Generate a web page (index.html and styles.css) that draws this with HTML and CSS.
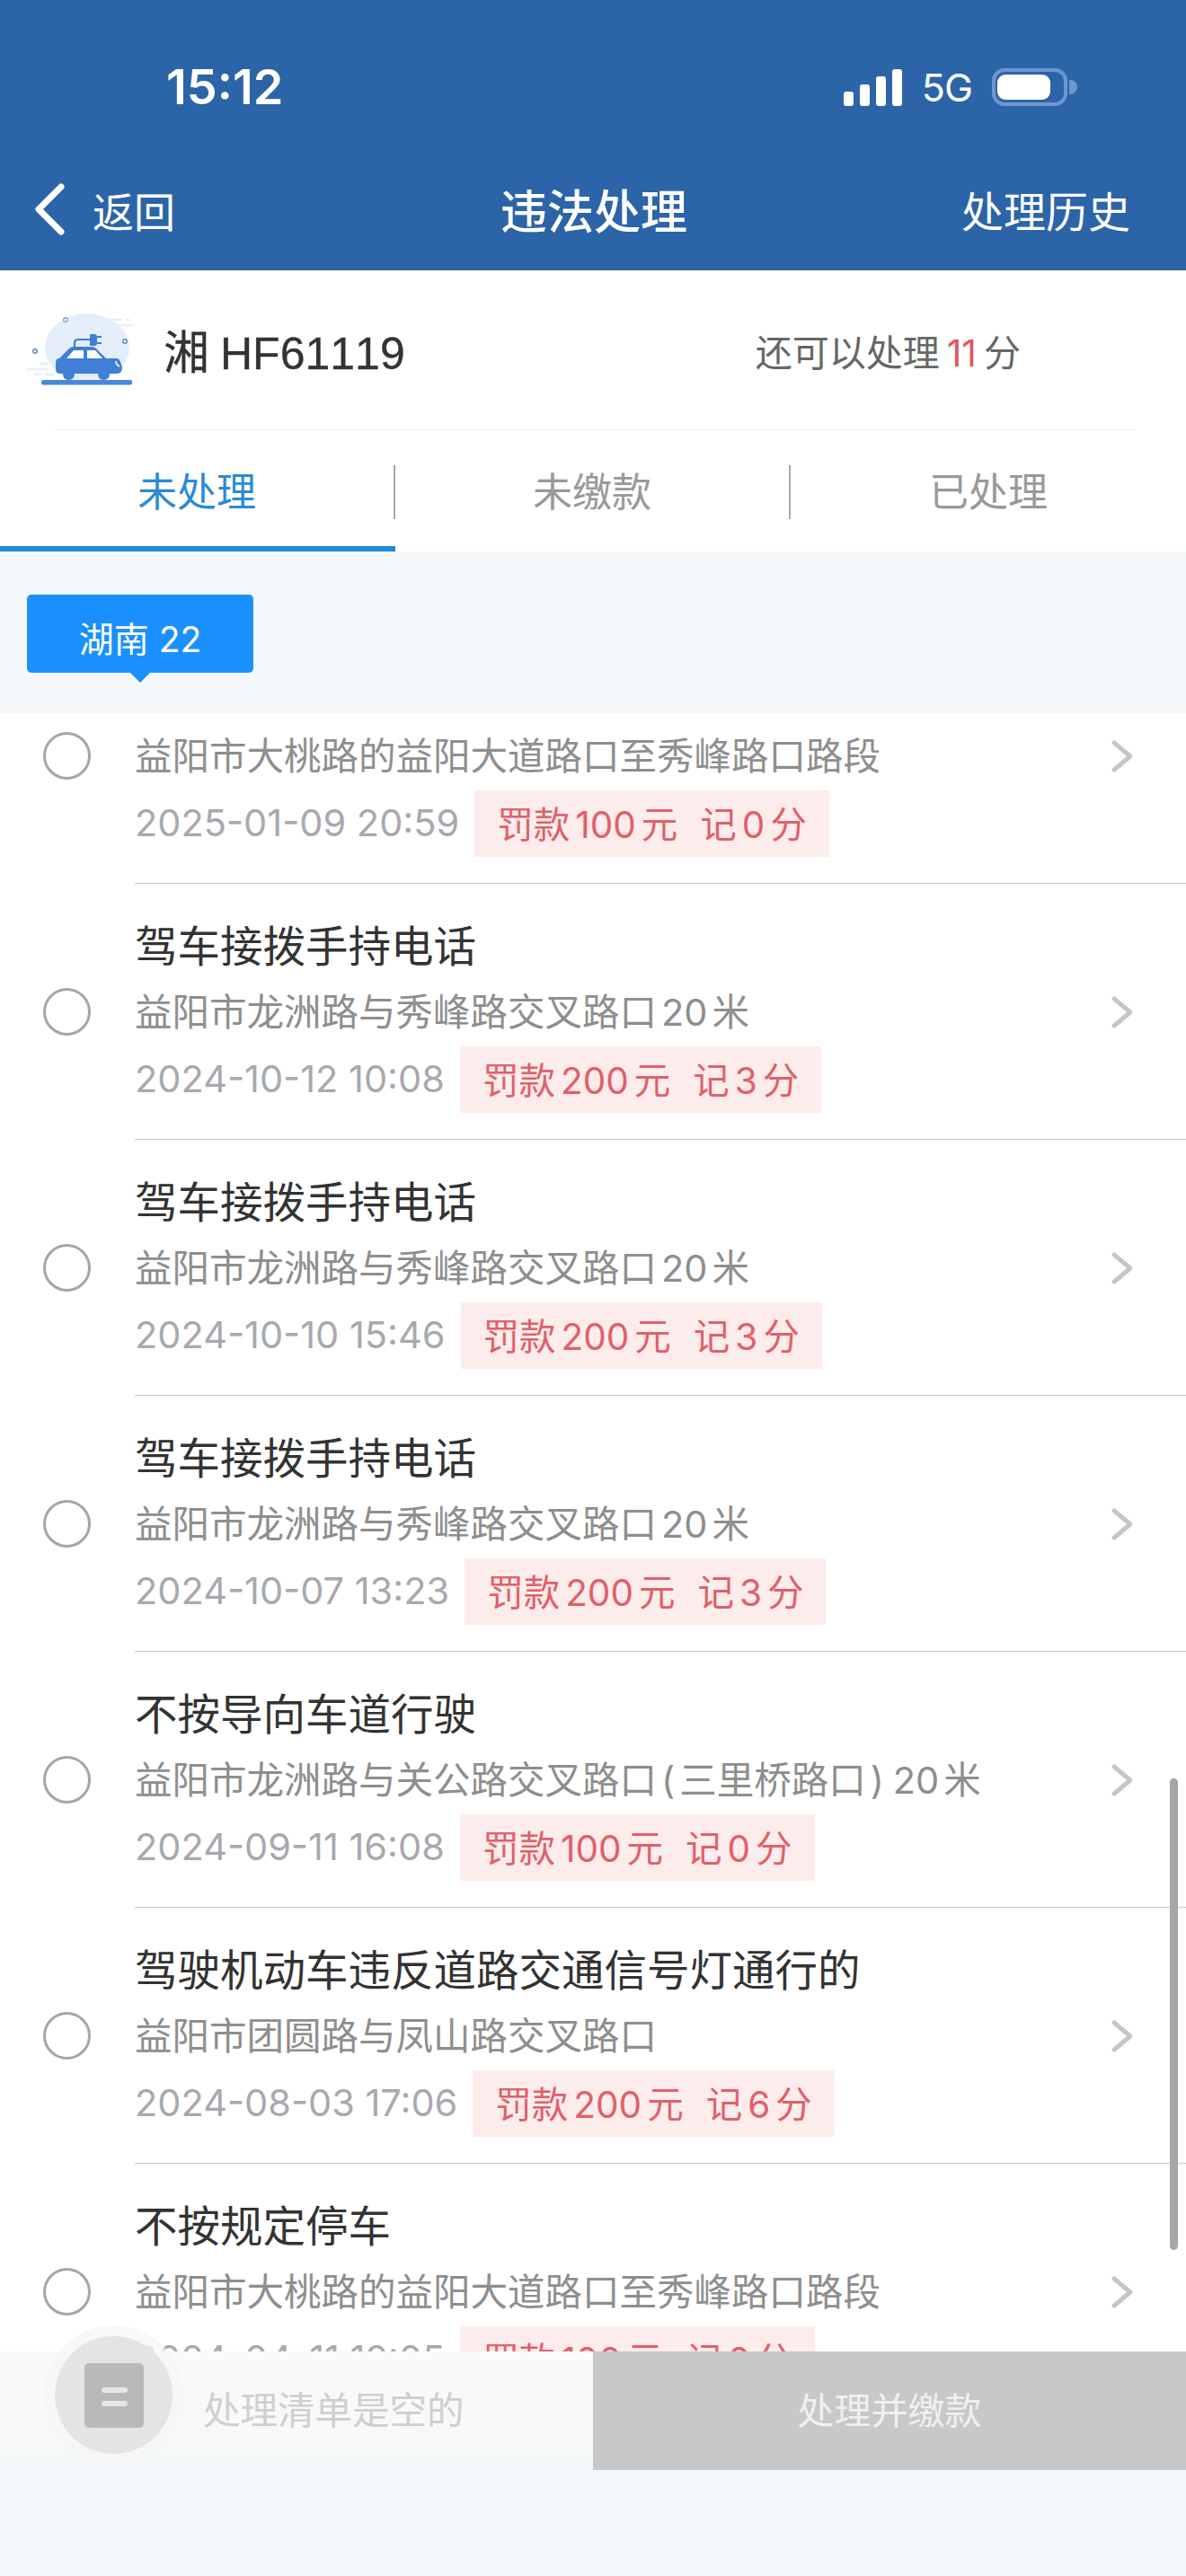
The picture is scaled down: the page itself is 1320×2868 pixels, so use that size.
FILE: index.html
```html
<!DOCTYPE html>
<html lang="zh-CN">
<head>
    <meta charset="UTF-8">
    <meta name="viewport" content="width=device-width, initial-scale=1.0">
    <title>违法处理</title>
    <link rel="stylesheet" href="styles.css">
</head>
<body>
<div class="page">

    <!-- Header -->
    <header class="header">
        <div class="status">
            <span class="time">15:12</span>
            <div class="status-right">
                <div class="signal">
                    <i class="bar1"></i><i class="bar2"></i><i class="bar3"></i><i class="bar4"></i>
                </div>
                <span class="net">5G</span>
                <div class="battery"><div class="battery-fill"></div></div>
                <div class="battery-nub"></div>
            </div>
        </div>
        <nav class="navbar">
            <a class="back">
                <svg width="36" height="58" viewBox="0 0 36 58"><path d="M31 4 L6 29 L31 54" fill="none" stroke="#fff" stroke-width="7" stroke-linecap="round" stroke-linejoin="round"/></svg>
                <span>返回</span>
            </a>
            <h1 class="title">违法处理</h1>
            <a class="history">处理历史</a>
        </nav>
    </header>

    <!-- Car info -->
    <section class="car">
        <svg class="car-icon" width="125" height="85" viewBox="28 346 125 85">
            <ellipse cx="97" cy="386" rx="47" ry="38" fill="#e4eefb"/>
            <path d="M118 355h18M140 355h4M124 361h26M30 410h24M44 404h10M38 416h8M50 416h10" stroke="#e8eef7" stroke-width="2.5" fill="none"/>
            <circle cx="73" cy="355" r="2.3" fill="#fff" stroke="#8f9fd4" stroke-width="1.4"/>
            <circle cx="139" cy="379" r="2.3" fill="#fff" stroke="#5c86c0" stroke-width="1.4"/>
            <circle cx="39" cy="390" r="2.3" fill="#fff" stroke="#5c86c0" stroke-width="1.4"/>
            <path d="M83 387v-6q0-4 4-4h13" fill="none" stroke="#3f7fd6" stroke-width="2.2"/>
            <path d="M100 371h5q3 0 3 3v7q0 3-3 3h-5z" fill="#3f7fd6"/>
            <path d="M108 374h5M108 381h5" stroke="#3f7fd6" stroke-width="2"/>
            <path d="M66 398l11-11q2-2 5-2h20q3 0 5 2l11 11h11q4 0 5 4l2 6q0 7-6 7H67q-5 0-5-5v-7q0-5 4-5z" fill="#3f7fd6"/>
            <path d="M74 398l8-9h11v9zM97 389h9l8 9H97z" fill="#fff"/>
            <path d="M129 401q0 4 4 6" fill="none" stroke="#fff" stroke-width="1.6"/>
            <path d="M70 415h13q0 7-6.500 7T70 415zM109 415h13q0 7-6.500 7T109 415z" fill="#3f7fd6"/>
            <rect x="46" y="422" width="101" height="5.500" rx="2" fill="#4a88dc"/>
        </svg>
        <div class="plate"><span class="plate-area">湘</span><span>HF61119</span></div>
        <div class="points">还可以处理<b>11</b>分</div>
    </section>
    <div class="car-line"></div>

    <!-- Tabs -->
    <div class="tabs">
        <div class="tab active"><div class="tab-label">未处理</div></div>
        <div class="tab"><div class="tab-label">未缴款</div></div>
        <div class="tab"><div class="tab-label last">已处理</div></div>
    </div>

    <!-- Province -->
    <div class="province">
        <div class="badge">湖南 22</div>
    </div>

    <!-- List -->
    <main class="list">
        <div class="row">
            <div class="radio"></div>
            <div class="place">益阳市大桃路的益阳大道路口至秀峰路口路段</div>
            <svg class="arrow" width="27" height="38" viewBox="0 0 27 38"><path d="M4 4 L22 19 L4 34" fill="none" stroke="#c6c6c6" stroke-width="5" stroke-linecap="round" stroke-linejoin="round"/></svg>
            <div class="meta">
                <span class="date">2025-01-09 20:59</span>
                <div class="fine"><span>罚款<i>100</i>元</span><span>记<i>0</i>分</span></div>
            </div>
        </div>
        <div class="row">
            <div class="name">驾车接拨手持电话</div>
            <div class="radio"></div>
            <div class="place">益阳市龙洲路与秀峰路交叉路口<i>20</i>米</div>
            <svg class="arrow" width="27" height="38" viewBox="0 0 27 38"><path d="M4 4 L22 19 L4 34" fill="none" stroke="#c6c6c6" stroke-width="5" stroke-linecap="round" stroke-linejoin="round"/></svg>
            <div class="meta">
                <span class="date">2024-10-12 10:08</span>
                <div class="fine"><span>罚款<i>200</i>元</span><span>记<i>3</i>分</span></div>
            </div>
        </div>
        <div class="row">
            <div class="name">驾车接拨手持电话</div>
            <div class="radio"></div>
            <div class="place">益阳市龙洲路与秀峰路交叉路口<i>20</i>米</div>
            <svg class="arrow" width="27" height="38" viewBox="0 0 27 38"><path d="M4 4 L22 19 L4 34" fill="none" stroke="#c6c6c6" stroke-width="5" stroke-linecap="round" stroke-linejoin="round"/></svg>
            <div class="meta">
                <span class="date">2024-10-10 15:46</span>
                <div class="fine"><span>罚款<i>200</i>元</span><span>记<i>3</i>分</span></div>
            </div>
        </div>
        <div class="row">
            <div class="name">驾车接拨手持电话</div>
            <div class="radio"></div>
            <div class="place">益阳市龙洲路与秀峰路交叉路口<i>20</i>米</div>
            <svg class="arrow" width="27" height="38" viewBox="0 0 27 38"><path d="M4 4 L22 19 L4 34" fill="none" stroke="#c6c6c6" stroke-width="5" stroke-linecap="round" stroke-linejoin="round"/></svg>
            <div class="meta">
                <span class="date">2024-10-07 13:23</span>
                <div class="fine"><span>罚款<i>200</i>元</span><span>记<i>3</i>分</span></div>
            </div>
        </div>
        <div class="row">
            <div class="name">不按导向车道行驶</div>
            <div class="radio"></div>
            <div class="place">益阳市龙洲路与关公路交叉路口<i>(</i>三里桥路口<i>)</i><i>20</i>米</div>
            <svg class="arrow" width="27" height="38" viewBox="0 0 27 38"><path d="M4 4 L22 19 L4 34" fill="none" stroke="#c6c6c6" stroke-width="5" stroke-linecap="round" stroke-linejoin="round"/></svg>
            <div class="meta">
                <span class="date">2024-09-11 16:08</span>
                <div class="fine"><span>罚款<i>100</i>元</span><span>记<i>0</i>分</span></div>
            </div>
        </div>
        <div class="row">
            <div class="name">驾驶机动车违反道路交通信号灯通行的</div>
            <div class="radio"></div>
            <div class="place">益阳市团圆路与凤山路交叉路口</div>
            <svg class="arrow" width="27" height="38" viewBox="0 0 27 38"><path d="M4 4 L22 19 L4 34" fill="none" stroke="#c6c6c6" stroke-width="5" stroke-linecap="round" stroke-linejoin="round"/></svg>
            <div class="meta">
                <span class="date">2024-08-03 17:06</span>
                <div class="fine"><span>罚款<i>200</i>元</span><span>记<i>6</i>分</span></div>
            </div>
        </div>
        <div class="row">
            <div class="name">不按规定停车</div>
            <div class="radio"></div>
            <div class="place">益阳市大桃路的益阳大道路口至秀峰路口路段</div>
            <svg class="arrow" width="27" height="38" viewBox="0 0 27 38"><path d="M4 4 L22 19 L4 34" fill="none" stroke="#c6c6c6" stroke-width="5" stroke-linecap="round" stroke-linejoin="round"/></svg>
            <div class="meta">
                <span class="date">2024-04-11 12:05</span>
                <div class="fine"><span>罚款<i>100</i>元</span><span>记<i>0</i>分</span></div>
            </div>
        </div>
        <div class="scrollbar"></div>
    </main>

    <!-- Bottom bar -->
    <footer class="bottom">
        <div class="basket">
            <div class="basket-ball">
                <div class="basket-doc"><i></i><i></i></div>
            </div>
        </div>
        <div class="bottom-left">处理清单是空的</div>
        <div class="bottom-btn">处理并缴款</div>
    </footer>

</div>
</body>
</html>
```

FILE: styles.css
```css
* {
    box-sizing: border-box;
}

body {
    margin: 0;
    font-family: Inter, "Noto Sans CJK SC", sans-serif;
    background: #f4f8fa;
}

.page {
    position: relative;
    width: 1320px;
    height: 2868px;
    overflow: hidden;
    display: flex;
    flex-direction: column;
}

/* Header */
.header {
    height: 301px;
    background: #2c64a8;
    color: #fff;
    flex: none;
}

.status {
    height: 172px;
    padding: 70px 121px 0 185px;
    display: flex;
    justify-content: space-between;
    align-items: flex-start;
}

.time {
    font-size: 54px;
    line-height: 54px;
    font-weight: 600;
}

.status-right {
    display: flex;
    align-items: center;
    height: 54px;
}

.signal {
    display: flex;
    align-items: flex-end;
    gap: 7px;
    height: 41px;
}

.signal i {
    display: block;
    width: 11px;
    background: #fff;
    border-radius: 3px;
}

.bar1 { height: 16px; }
.bar2 { height: 24px; }
.bar3 { height: 33px; }
.bar4 { height: 41px; }

.net {
    font-size: 43px;
    margin-left: 22px;
    margin-right: 22px;
    letter-spacing: -1px;
}

.battery {
    width: 84px;
    height: 42px;
    border: 4px solid #6f97cd;
    border-radius: 14px;
    padding: 3px 15px 3px 2px;
}

.battery-fill {
    height: 100%;
    background: #fff;
    border-radius: 9px;
}

.battery-nub {
    width: 9px;
    height: 16px;
    margin-left: 2px;
    background: #6f97cd;
    border-radius: 0 8px 8px 0;
}

.navbar {
    height: 129px;
    padding: 0 62px 7px 64px;
    display: grid;
    grid-template-columns: 1fr auto 1fr;
    align-items: center;
    border-bottom: 1px solid #33608f;
}

.back {
    display: flex;
    align-items: center;
    gap: 30px;
    margin-left: -27px;
    font-size: 46px;
}

.back svg {
    flex: none;
}

.title {
    margin: 0;
    font-size: 52px;
    font-weight: 500;
}

.history {
    justify-self: end;
    font-size: 47px;
}

/* Car info */
.car {
    height: 177px;
    background: #fff;
    padding: 0 184px 0 28px;
    display: flex;
    align-items: center;
    flex: none;
}

.car-icon {
    flex: none;
    margin-right: 29px;
}

.plate {
    display: flex;
    align-items: baseline;
    gap: 12px;
    margin-bottom: 2px;
    font-size: 50px;
    font-kerning: none;
    color: #333;
    font-family: "Liberation Sans", "Noto Sans CJK SC", sans-serif;
    -webkit-text-stroke: 0.3px #333;
}

.plate-area {
    font-size: 51px;
}

.points {
    margin-left: auto;
    font-size: 41px;
    color: #666;
}

.points b {
    font-weight: 400;
    color: #e0585a;
    margin: 0 8px;
}

.car-line {
    height: 1px;
    background: #fff;
    border-left: 60px solid #fff;
    border-right: 58px solid #fff;
    flex: none;
    background-clip: padding-box;
    background-color: #eeeeee;
}

/* Tabs */
.tabs {
    display: grid;
    grid-template-columns: 440px 440px 440px;
    background: #fff;
    flex: none;
}

.tab {
    height: 135px;
    padding-top: 39px;
    border-bottom: 6px solid transparent;
    font-size: 44px;
    color: #999;
}

.tab.active {
    color: #2a8bd5;
    border-bottom-color: #1f8ad6;
}

.tab-label {
    height: 60px;
    line-height: 60px;
    text-align: center;
    border-right: 2px solid #a8a8a8;
}

.tab-label.last {
    border-right: none;
}

/* Province */
.province {
    height: 180px;
    padding: 48px 0 0 30px;
    flex: none;
}

.badge {
    position: relative;
    width: 252px;
    height: 87px;
    padding-top: 12px;
    line-height: 75px;
    text-align: center;
    background: #1a90ff;
    border-radius: 5px;
    color: #fff;
    font-size: 39px;
}

.badge::after {
    content: "";
    position: absolute;
    left: 115px;
    bottom: -11px;
    border-left: 11px solid transparent;
    border-right: 11px solid transparent;
    border-top: 11px solid #1a90ff;
}

/* List */
.list {
    position: relative;
    height: 1824px;
    overflow: hidden;
    background: #fff;
    flex: none;
}

.row {
    display: grid;
    grid-template-columns: 150px 1fr 91px;
    padding-top: 20px;
    padding-bottom: 30px;
    background: linear-gradient(#c9c9c9, #c9c9c9) no-repeat 150px 100% / 100% 1px;
}

.row + .row {
    padding-top: 40px;
}

.name {
    grid-column: 2 / 4;
    height: 60px;
    line-height: 60px;
    margin-bottom: 15px;
    font-size: 47.500px;
    color: #333;
}

.radio {
    grid-column: 1;
    width: 53px;
    height: 53px;
    margin: 1px 0 0 48px;
    border: 3px solid #a6a6a6;
    border-radius: 50%;
}

.place {
    grid-column: 2;
    height: 56px;
    line-height: 56px;
    margin-bottom: 10px;
    font-size: 41.500px;
    color: #8e8e8e;
    white-space: nowrap;
}

.place i {
    font-style: normal;
    margin: 0 5px;
}

.arrow {
    grid-column: 3;
    align-self: center;
    margin-bottom: 10px;
    margin-left: 7px;
}

.meta {
    grid-column: 2 / 4;
    display: flex;
    align-items: center;
    gap: 17px;
}

.date {
    margin-bottom: 3px;
    font-size: 41.500px;
    color: #a7a9af;
}

.fine {
    display: flex;
    gap: 25px;
    height: 74px;
    padding: 0 25px 3px;
    align-items: center;
    background: #fdecec;
    color: #e0606a;
    font-size: 40.500px;
}

.fine i {
    font-style: normal;
    margin: 0 6px;
}

.scrollbar {
    position: absolute;
    top: 1186px;
    right: 9px;
    width: 9px;
    height: 525px;
    background: #a6a6a6;
    border-radius: 5px;
}

/* Bottom bar */
.bottom {
    position: relative;
    height: 132px;
    display: grid;
    grid-template-columns: 660px 660px;
    flex: none;
}

.bottom-left {
    padding-left: 226px;
    line-height: 132px;
    font-size: 41.500px;
    color: #cfcfcf;
    background: linear-gradient(#fafafa, #f5f8f9);
}

.bottom-btn {
    line-height: 132px;
    text-align: center;
    font-size: 41px;
    color: #f0f0f0;
    background: #c8c8c8;
}

.basket {
    position: absolute;
    left: 49px;
    top: -29px;
    width: 155px;
    height: 155px;
    padding: 12px;
    border-radius: 50%;
    background: rgba(245, 245, 245, 0.75);
}

.basket-ball {
    width: 131px;
    height: 131px;
    border-radius: 50%;
    background: #e4e4e4;
    padding: 30px 33px;
}

.basket-doc {
    width: 66px;
    height: 72px;
    background: #b9b9b9;
    border-radius: 5px;
    padding-top: 27px;
    display: flex;
    flex-direction: column;
    align-items: center;
    gap: 9px;
}

.basket-doc i {
    display: block;
    width: 29px;
    height: 6px;
    background: #e6e6e6;
    border-radius: 3px;
}
```
